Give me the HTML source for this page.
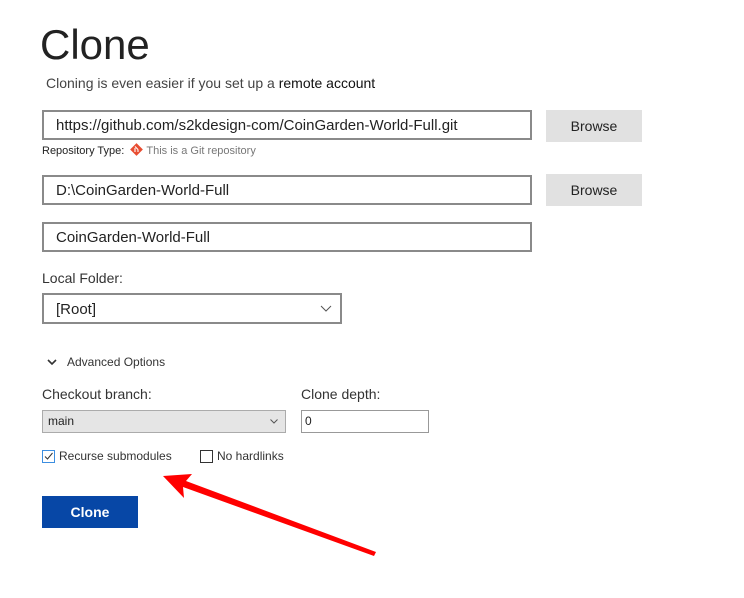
<!DOCTYPE html>
<html><head><style>
body{margin:0;width:744px;height:598px;background:#fff;font-family:"Segoe UI","Liberation Sans",sans-serif;color:#222;position:relative;overflow:hidden}
.a{position:absolute}
.inp{position:absolute;box-sizing:border-box;border:2px solid #8a8a8a;background:#fff;font-size:15px;padding-left:12px;line-height:28px}
.btn{position:absolute;background:#e1e1e1;font-size:14px;text-align:center;color:#222}
.lbl{position:absolute;font-size:14px;color:#333}
</style></head><body>
<div class="a" style="left:40px;top:21px;font-size:42px;color:#222">Clone</div>
<div class="a" style="left:46px;top:75px;font-size:14px;color:#444">Cloning is even easier if you set up a <span style="color:#111">remote account</span></div>
<div class="inp" style="left:42px;top:110px;width:490px;height:30px">https://github.com/s2kdesign-com/CoinGarden-World-Full.git</div>
<div class="btn" style="left:546px;top:110px;width:96px;height:32px;line-height:32px">Browse</div>
<div class="a" style="left:42px;top:143px;font-size:11px;color:#222">Repository Type: <svg width="13" height="13" viewBox="0 0 13 13" style="vertical-align:-2px;margin:0 3px"><rect x="2" y="2" width="9" height="9" transform="rotate(45 6.5 6.5)" fill="#e84d31"/><path d="M5 3.5L8 6.5M5 5v4M8 6.5v2.5" stroke="#fff" stroke-width="1.1"/></svg><span style="color:#777">This is a Git repository</span></div>
<div class="inp" style="left:42px;top:175px;width:490px;height:30px">D:\CoinGarden-World-Full</div>
<div class="btn" style="left:546px;top:174px;width:96px;height:32px;line-height:32px">Browse</div>
<div class="inp" style="left:42px;top:222px;width:490px;height:30px">CoinGarden-World-Full</div>
<div class="lbl" style="left:42px;top:270px">Local Folder:</div>
<div class="inp" style="left:42px;top:293px;width:300px;height:31px;line-height:29px">[Root]<svg class="a" style="right:8px;top:10px" width="12" height="7"><path d="M1 1l5 5 5-5" stroke="#555" fill="none"/></svg></div>
<svg class="a" style="left:47px;top:359px" width="10" height="7"><path d="M1 1l4 4 4-4" stroke="#333" stroke-width="1.6" fill="none"/></svg>
<div class="a" style="left:67px;top:355px;font-size:12px;color:#333">Advanced Options</div>
<div class="lbl" style="left:42px;top:386px">Checkout branch:</div>
<div class="a" style="left:42px;top:410px;width:244px;height:23px;box-sizing:border-box;border:1px solid #ababab;background:#e5e5e5;font-size:12px;line-height:21px;padding-left:5px">main<svg class="a" style="right:7px;top:8px" width="8" height="5"><path d="M.5.5l3.5 3.5 3.5-3.5" stroke="#555" fill="none"/></svg></div>
<div class="lbl" style="left:301px;top:386px">Clone depth:</div>
<div class="a" style="left:301px;top:410px;width:128px;height:23px;box-sizing:border-box;border:1px solid #999;background:#fff;font-size:12px;line-height:21px;padding-left:3px">0</div>
<div class="a" style="left:42px;top:450px;width:13px;height:13px;box-sizing:border-box;border:1px solid #3c8ee0;background:#fff"><svg width="11" height="11" style="position:absolute;left:0;top:0"><path d="M2 5.5l2.5 2.5 5-6" stroke="#333" fill="none"/></svg></div>
<div class="a" style="left:59px;top:449px;font-size:12px;color:#333">Recurse submodules</div>
<div class="a" style="left:200px;top:450px;width:13px;height:13px;box-sizing:border-box;border:1px solid #333;background:#fff"></div>
<div class="a" style="left:217px;top:449px;font-size:12px;color:#333">No hardlinks</div>
<div class="a" style="left:42px;top:496px;width:96px;height:32px;background:#0747a6;color:#fff;font-weight:bold;font-size:14px;text-align:center;line-height:32px">Clone</div>
<svg class="a" style="left:0;top:0" width="744" height="598"><path d="M163 476L192 474L186 481L376 552L374 556L183 487L184 498Z" fill="#f00"/></svg>
</body></html>
